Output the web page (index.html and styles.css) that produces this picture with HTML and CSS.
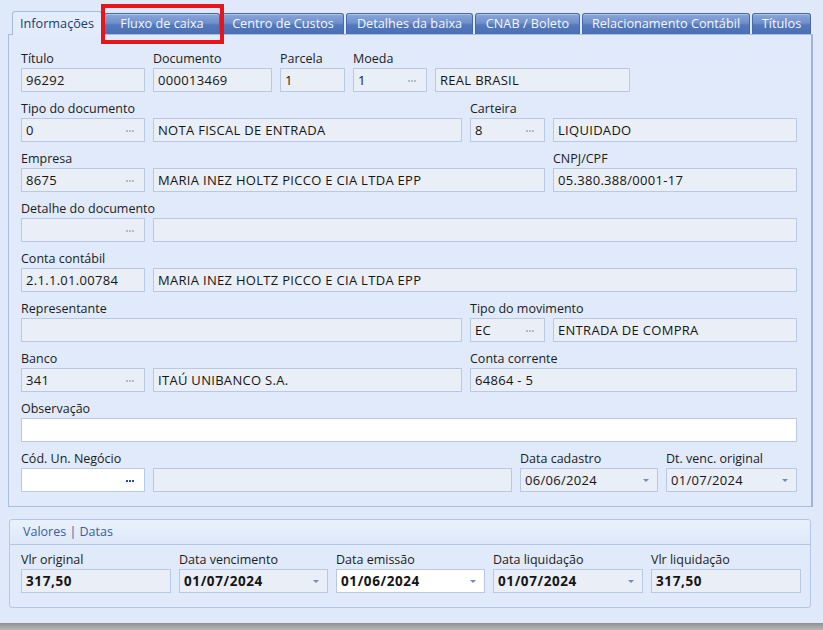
FILE: index.html
```html
<!DOCTYPE html>
<html lang="pt-BR">
<head>
<meta charset="utf-8">
<title>Títulos</title>
<link rel="stylesheet" href="styles.css">
</head>
<body>
<div class="window">
  <div class="tabs">
    <div class="tab active t-info">Informações</div>
    <div class="tab t-fluxo">Fluxo de caixa</div>
    <div class="tab t-centro">Centro de Custos</div>
    <div class="tab t-det">Detalhes da baixa</div>
    <div class="tab t-cnab">CNAB / Boleto</div>
    <div class="tab t-rel">Relacionamento Contábil</div>
    <div class="tab t-tit">Títulos</div>
    <div class="highlight"></div>
  </div>

  <div class="panel">
    <div class="row">
      <div class="field"><label>Título</label><div class="inputs"><div class="input w124">96292</div></div></div>
      <div class="field"><label>Documento</label><div class="inputs"><div class="input w119">000013469</div></div></div>
      <div class="field"><label>Parcela</label><div class="inputs"><div class="input w65">1</div></div></div>
      <div class="field"><label>Moeda</label><div class="inputs"><div class="input w74 lookup">1<span class="dots"></span></div><div class="input w195">REAL BRASIL</div></div></div>
    </div>

    <div class="row">
      <div class="field"><label>Tipo do documento</label><div class="inputs"><div class="input w124 lookup">0<span class="dots"></span></div><div class="input w309">NOTA FISCAL DE ENTRADA</div></div></div>
      <div class="field"><label>Carteira</label><div class="inputs"><div class="input w75 lookup">8<span class="dots"></span></div><div class="input w244">LIQUIDADO</div></div></div>
    </div>

    <div class="row">
      <div class="field"><label>Empresa</label><div class="inputs"><div class="input w124 lookup">8675<span class="dots"></span></div><div class="input w392">MARIA INEZ HOLTZ PICCO E CIA LTDA EPP</div></div></div>
      <div class="field"><label>CNPJ/CPF</label><div class="inputs"><div class="input w244">05.380.388/0001-17</div></div></div>
    </div>

    <div class="row">
      <div class="field"><label>Detalhe do documento</label><div class="inputs"><div class="input w124 lookup"><span class="dots"></span></div><div class="input w644"></div></div></div>
    </div>

    <div class="row">
      <div class="field"><label>Conta contábil</label><div class="inputs"><div class="input w124">2.1.1.01.00784</div><div class="input w644">MARIA INEZ HOLTZ PICCO E CIA LTDA EPP</div></div></div>
    </div>

    <div class="row">
      <div class="field"><label>Representante</label><div class="inputs"><div class="input w441"></div></div></div>
      <div class="field"><label>Tipo do movimento</label><div class="inputs"><div class="input w75 lookup">EC<span class="dots"></span></div><div class="input w244">ENTRADA DE COMPRA</div></div></div>
    </div>

    <div class="row">
      <div class="field"><label>Banco</label><div class="inputs"><div class="input w124 lookup">341<span class="dots"></span></div><div class="input w309">ITAÚ UNIBANCO S.A.</div></div></div>
      <div class="field"><label>Conta corrente</label><div class="inputs"><div class="input w327">64864 - 5</div></div></div>
    </div>

    <div class="row">
      <div class="field"><label>Observação</label><div class="inputs"><div class="input w776 editable"></div></div></div>
    </div>

    <div class="row">
      <div class="field"><label>Cód. Un. Negócio</label><div class="inputs"><div class="input w124 lookup editable"><span class="dots dark"></span></div><div class="input w359"></div></div></div>
      <div class="field"><label>Data cadastro</label><div class="inputs"><div class="input w138 combo">06/06/2024<span class="arrow"></span></div></div></div>
      <div class="field"><label>Dt. venc. original</label><div class="inputs"><div class="input w131 combo">01/07/2024<span class="arrow"></span></div></div></div>
    </div>
  </div>

  <div class="group">
    <div class="group-header">Valores | Datas</div>
    <div class="group-body">
      <div class="field"><label>Vlr original</label><div class="inputs"><div class="input w150 strong">317,50</div></div></div>
      <div class="field"><label>Data vencimento</label><div class="inputs"><div class="input w149 strong combo">01/07/2024<span class="arrow"></span></div></div></div>
      <div class="field"><label>Data emissão</label><div class="inputs"><div class="input w149 strong combo editable">01/06/2024<span class="arrow"></span></div></div></div>
      <div class="field"><label>Data liquidação</label><div class="inputs"><div class="input w150 strong combo">01/07/2024<span class="arrow"></span></div></div></div>
      <div class="field"><label>Vlr liquidação</label><div class="inputs"><div class="input w150 strong">317,50</div></div></div>
    </div>
  </div>

  <div class="statusbar"></div>
</div>
</body>
</html>
```

FILE: styles.css
```css
* { box-sizing: border-box; }

html, body {
  margin: 0;
  padding: 0;
  background: #dfe9f9;
  font-family: "Open Sans", "Liberation Sans", sans-serif;
  font-size: 12.5px;
  color: #1b1b1b;
}

.window {
  width: 823px;
  height: 630px;
  display: flex;
  flex-direction: column;
  overflow: hidden;
}

/* ---------- tabs ---------- */
.tabs {
  position: relative;
  height: 34px;
  display: flex;
  align-items: flex-end;
  gap: 2px;
  padding-left: 12px;
}

.tab {
  height: 21px;
  line-height: 19px;
  font-size: 12.7px;
  text-align: center;
  white-space: nowrap;
  color: #f3f6fc;
  border: 1px solid #4868a6;
  border-bottom: none;
  border-radius: 3px 3px 0 0;
  background: linear-gradient(#8aa7d9 0%, #6f90cc 45%, #5478bb 55%, #4a6fb3 100%);
  box-shadow: inset 0 1px 0 rgba(255,255,255,0.35);
}

.tab.active {
  height: 24px;
  line-height: 22px;
  margin-bottom: -1px;
  position: relative;
  z-index: 1;
  color: #1f3b6c;
  background: #e2ecfb;
  border-color: #a4bbdf;
  box-shadow: none;
}

.t-info { width: 90px; }
.t-fluxo { width: 116px; }
.t-centro { width: 122px; }
.t-det { width: 127px; }
.t-cnab { width: 105px; }
.t-rel { width: 168px; }
.t-tit { width: 59px; }

.highlight {
  position: absolute;
  left: 101px;
  top: 4px;
  width: 123px;
  height: 40px;
  border: 4px solid #e8141b;
  z-index: 2;
}

/* ---------- main panel ---------- */
.panel {
  margin-left: 8px;
  width: 805px;
  height: 473px;
  background: #e0eafa;
  border: 1px solid #a9bfe2;
  border-right: 2px solid #9db3d9;
  padding: 15px 12px 13px 12px;
  display: flex;
  flex-direction: column;
  gap: 8px;
}

.row {
  display: flex;
  gap: 8px;
}

.field {
  display: flex;
  flex-direction: column;
}

.field label {
  height: 18px;
  line-height: 17px;
  white-space: nowrap;
  color: #1c1c1c;
}

.inputs {
  display: flex;
  gap: 8px;
}

.input {
  position: relative;
  height: 24px;
  line-height: 22px;
  padding-left: 4px;
  font-size: 13px;
  letter-spacing: 0.3px;
  background: #e9eef7;
  border: 1px solid #b7c9e5;
  white-space: nowrap;
  overflow: hidden;
  color: #151515;
}

.input.editable { background: #ffffff; }
.input.strong {
  font-weight: 700;
  font-size: 13.5px;
  letter-spacing: 0.6px;
  padding-left: 4px;
}

.dots {
  position: absolute;
  right: 10px;
  top: 11px;
  width: 8px;
  height: 2px;
  background-image: linear-gradient(to right, #b3bccb 2px, transparent 2px);
  background-size: 3px 2px;
  background-repeat: repeat-x;
}
.dots.dark {
  background-image: linear-gradient(to right, #2c4f8c 2px, transparent 2px);
}

.arrow {
  position: absolute;
  right: 8px;
  top: 10px;
  width: 0;
  height: 0;
  border-left: 3px solid transparent;
  border-right: 3px solid transparent;
  border-top: 3px solid #6d8cc2;
}

.w65 { width: 65px; }
.w74 { width: 74px; }
.w75 { width: 75px; }
.w119 { width: 119px; }
.w124 { width: 124px; }
.w131 { width: 131px; }
.w138 { width: 138px; }
.w149 { width: 149px; }
.w150 { width: 150px; }
.w195 { width: 195px; }
.w244 { width: 244px; }
.w309 { width: 309px; }
.w327 { width: 327px; }
.w359 { width: 359px; }
.w392 { width: 392px; }
.w441 { width: 441px; }
.w644 { width: 644px; }
.w776 { width: 776px; }

/* ---------- group box ---------- */
.group {
  margin: 12px 0 0 9px;
  width: 802px;
  height: 89px;
  border: 1px solid #b3c7e6;
  border-radius: 3px;
  background: #e0eafa;
  display: flex;
  flex-direction: column;
}

.group-header {
  height: 25px;
  line-height: 24px;
  padding-left: 13px;
  color: #3a5d9e;
  border-bottom: 1px solid #b3c7e6;
  background: linear-gradient(#eaf1fc, #dde8f8);
  border-radius: 3px 3px 0 0;
}

.group-body {
  display: flex;
  gap: 8px;
  padding: 6px 11px 0 11px;
}

.statusbar {
  margin-top: 15px;
  height: 7px;
  background: linear-gradient(#8f8f8f, #b9b9b9);
}
```
